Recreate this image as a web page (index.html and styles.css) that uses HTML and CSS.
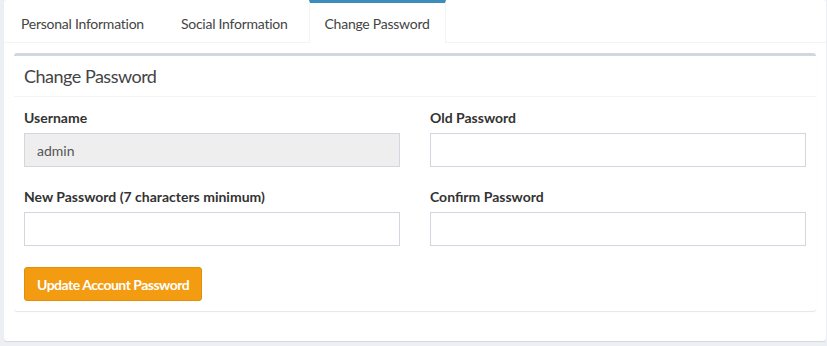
FILE: index.html
```html
<!DOCTYPE html>
<html lang="en">
<head>
    <meta charset="UTF-8">
    <meta name="viewport" content="width=device-width, initial-scale=1.0">
    <title>Change Password</title>
    <link rel="stylesheet" href="styles.css">
</head>
<body>
    <div class="nav-tabs-custom">
        <ul class="nav-tabs">
            <li><a href="#personal">Personal Information</a></li>
            <li><a href="#social">Social Information</a></li>
            <li class="active"><a href="#password">Change Password</a></li>
        </ul>
        <div class="tab-content">
            <div class="box">
                <div class="box-header">
                    <h3 class="box-title">Change Password</h3>
                </div>
                <form class="box-body" id="passwordForm">
                    <div class="form-grid">
                        <div class="form-group">
                            <label for="username">Username</label>
                            <input type="text" id="username" class="form-control" value="admin" disabled>
                        </div>
                        <div class="form-group">
                            <label for="oldPassword">Old Password</label>
                            <input type="password" id="oldPassword" class="form-control">
                        </div>
                        <div class="form-group">
                            <label for="newPassword">New Password (7 characters minimum)</label>
                            <input type="password" id="newPassword" class="form-control">
                        </div>
                        <div class="form-group">
                            <label for="confirmPassword">Confirm Password</label>
                            <input type="password" id="confirmPassword" class="form-control">
                        </div>
                    </div>
                    <button type="submit" class="btn-warning">Update Account Password</button>
                </form>
            </div>
        </div>
    </div>
</body>
</html>
```

FILE: styles.css
```css
* {
    margin: 0;
    padding: 0;
    box-sizing: border-box;
    font-family: 'Source Sans Pro', Lato, 'Liberation Sans', sans-serif;
}

body {
    background: #ecf0f5;
    padding: 0 1px 4px 4px;
    color: #333;
    font-size: 14px;
    line-height: 20px;
}

.nav-tabs-custom {
    background: #fff;
    border-radius: 3px;
    box-shadow: 0 1px 1px rgba(0, 0, 0, 0.1);
}

.nav-tabs {
    display: flex;
    list-style: none;
    border-bottom: 1px solid #f4f4f4;
    padding-left: 1px;
}

.nav-tabs li {
    border-top: 3px solid transparent;
    border-left: 1px solid transparent;
    border-right: 1px solid transparent;
    margin-right: 5px;
    margin-bottom: -1px;
}

.nav-tabs li a {
    display: block;
    padding: 11px 15px 9px;
    color: #444;
    text-decoration: none;
    letter-spacing: -0.25px;
}

.nav-tabs li.active {
    border-top-color: #3c8dbc;
    border-left-color: #f4f4f4;
    border-right-color: #f4f4f4;
    background: #fff;
}

.tab-content {
    padding: 10px;
}

.box {
    background: #fff;
    border-top: 3px solid #d2d6de;
    border-radius: 3px;
    box-shadow: 0 1px 1px rgba(0, 0, 0, 0.1);
    margin-bottom: 20px;
}

.box-header {
    padding: 10px;
    border-bottom: 1px solid #f4f4f4;
}

.box-title {
    font-size: 18px;
    font-weight: 400;
    line-height: 20px;
    color: #444;
    letter-spacing: -0.5px;
}

.box-body {
    padding: 11px 10px 10px;
}

.form-grid {
    display: grid;
    grid-template-columns: 1fr 1fr;
    column-gap: 30px;
}

.form-group {
    margin-bottom: 20px;
}

label {
    display: block;
    font-weight: 700;
    margin-bottom: 5px;
}

.form-control {
    width: 100%;
    height: 34px;
    padding: 6px 12px;
    border: 1px solid #d2d6de;
    border-radius: 0;
    font-size: 14px;
    color: #555;
    background: #fff;
}

.form-control:disabled {
    background: #eee;
}

.btn-warning {
    margin-top: 1px;
    height: 34px;
    padding: 6px 12px;
    background: #f39c12;
    border: 1px solid #e08e0b;
    border-radius: 3px;
    color: #fff;
    font-size: 14px;
    font-weight: 700;
    letter-spacing: -0.5px;
    cursor: pointer;
}
```
